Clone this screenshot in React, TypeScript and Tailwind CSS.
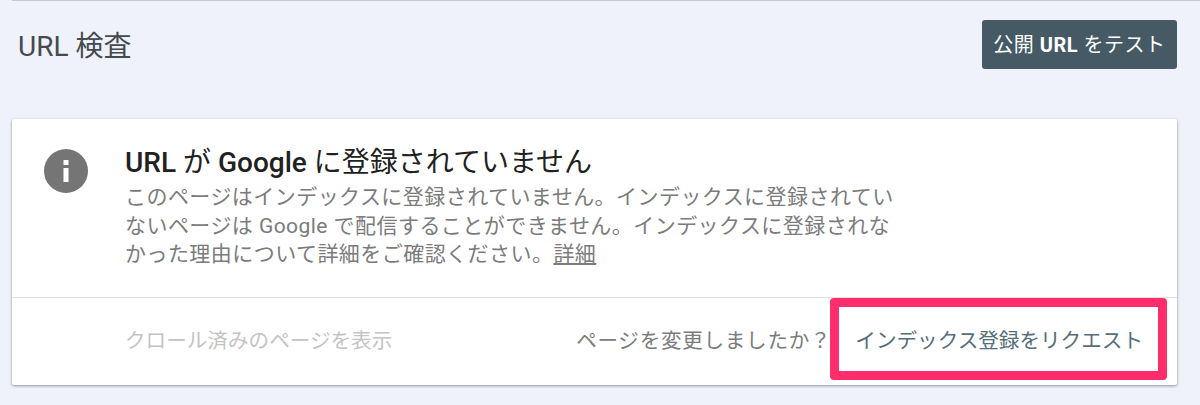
const cjk = "font-['Roboto','Noto_Sans_CJK_JP',sans-serif]";

const App = () => {
  return (
    <div className={`relative h-[405px] w-[1200px] overflow-hidden bg-[#eff2fa] pl-3 ${cjk}`}>
      {/* Top rule */}
      <div className="h-px bg-[#c4cac8]" />

      {/* Header */}
      <div className="flex h-[118px] w-[1165px] items-start justify-between">
        <h1 className="mt-[29px] pl-[6px] text-[28px] leading-[34px] font-normal text-[#444a4e]">URL 検査</h1>
        <button className="mt-[19px] flex h-[49px] w-[195px] items-center justify-center rounded-[3px] bg-[#455a64] text-[20px] tracking-[0.5px] text-white">
          <span>
            公開 <span className="font-bold">URL</span> をテスト
          </span>
        </button>
      </div>

      {/* Card */}
      <div className="h-[266px] w-[1165px] rounded-[2px] bg-white shadow-[0_1px_3px_rgba(60,64,67,0.55)]">
        <div className="flex h-[179px] border-b border-[#dfe1e4]">
          <div className="w-[113px] shrink-0 pt-[29px] pl-[31px]">
            <svg width="46" height="46" viewBox="0 0 46 46">
              <circle cx="23" cy="23" r="22" fill="#757575" />
              <rect x="20.5" y="20" width="5" height="14" fill="#fff" />
              <rect x="20.5" y="12" width="5" height="5" fill="#fff" />
            </svg>
          </div>
          <div className="pt-[25px]">
            <h2 className="text-[28px] leading-[38px] font-normal text-[#212121]">
              <span className="font-medium">URL</span> が <span className="font-medium">Google</span> に登録されていません
            </h2>
            <p className="mt-[1px] w-[775px] text-[21px] leading-[28.5px] tracking-[0.45px] text-[#7b7b7b]">
              このページはインデックスに登録されていません。インデックスに登録されていないページは Google で配信することができません。インデックスに登録されなかった理由について詳細をご確認ください。<span className="underline">詳細</span>
            </p>
          </div>
        </div>
        <div className="flex h-[86px] items-center justify-between pr-[34px] pl-[113px] text-[20.6px]">
          <span className="text-[#c4c4c4]">クロール済みのページを表示</span>
          <div className="flex items-center gap-[24px]">
            <span className="tracking-[0.7px] text-[#7b7b7b]">ページを変更しましたか？</span>
            <span className="text-[#546e7a]">インデックス登録をリクエスト</span>
          </div>
        </div>
      </div>

      {/* Pink highlight */}
      <div className="absolute top-[298px] left-[830px] h-[82px] w-[337px] rounded-[4px] border-[9px] border-[#ff2d6b]" />
    </div>
  );
};

export default App;
